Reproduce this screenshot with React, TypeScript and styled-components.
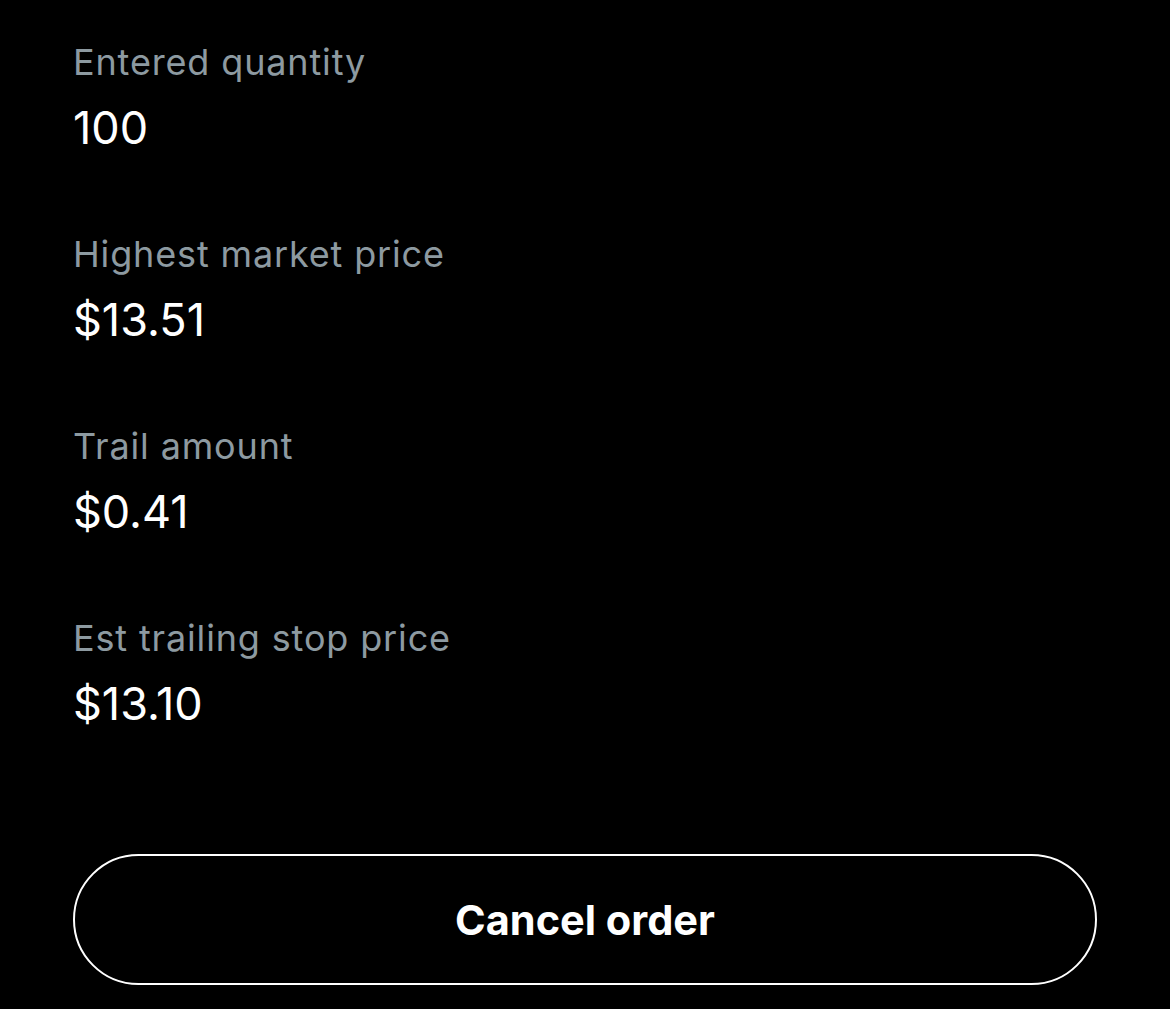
import * as React from 'react';
import styled, { createGlobalStyle } from 'styled-components';

interface Detail {
  label: string;
  value: string;
}

const details: Detail[] = [
  { label: 'Entered quantity', value: '100' },
  { label: 'Highest market price', value: '$13.51' },
  { label: 'Trail amount', value: '$0.41' },
  { label: 'Est trailing stop price', value: '$13.10' }
];

const App = () => (
  <>
    <GlobalStyle />
    <Screen>
      <DetailList>
        {details.map(d => (
          <DetailItem key={d.label}>
            <Label>{d.label}</Label>
            <Value>{d.value}</Value>
          </DetailItem>
        ))}
      </DetailList>
      <CancelButton type="button">Cancel order</CancelButton>
    </Screen>
  </>
);

const GlobalStyle = createGlobalStyle`
  html, body {
    margin: 0;
    background: #000;
  }
  body {
    font-family: Inter, "Noto Sans", sans-serif;
    -webkit-font-smoothing: antialiased;
  }
`;

const Screen = styled.main`
  width: 1170px;
  min-height: 1009px;
  box-sizing: border-box;
  padding: 38px 73px 0 73px;
  background: #000;
  display: flex;
  flex-direction: column;
`;

const DetailList = styled.div`
  display: flex;
  flex-direction: column;
  gap: 74px;
`;

const DetailItem = styled.div`
  display: flex;
  flex-direction: column;
  gap: 14px;
`;

const Label = styled.span`
  font-size: 36px;
  line-height: 48px;
  color: #8d9aa1;
  letter-spacing: 0.85px;
`;

const Value = styled.span`
  font-size: 45px;
  line-height: 56px;
  color: #fff;
`;

const CancelButton = styled.button`
  margin-top: 122px;
  width: 1024px;
  height: 131px;
  box-sizing: border-box;
  border: 2px solid #fff;
  border-radius: 66px;
  background: transparent;
  color: #fff;
  font-family: Inter, "Noto Sans", sans-serif;
  font-size: 41.5px;
  font-weight: 700;
  cursor: pointer;
`;

export default App;
